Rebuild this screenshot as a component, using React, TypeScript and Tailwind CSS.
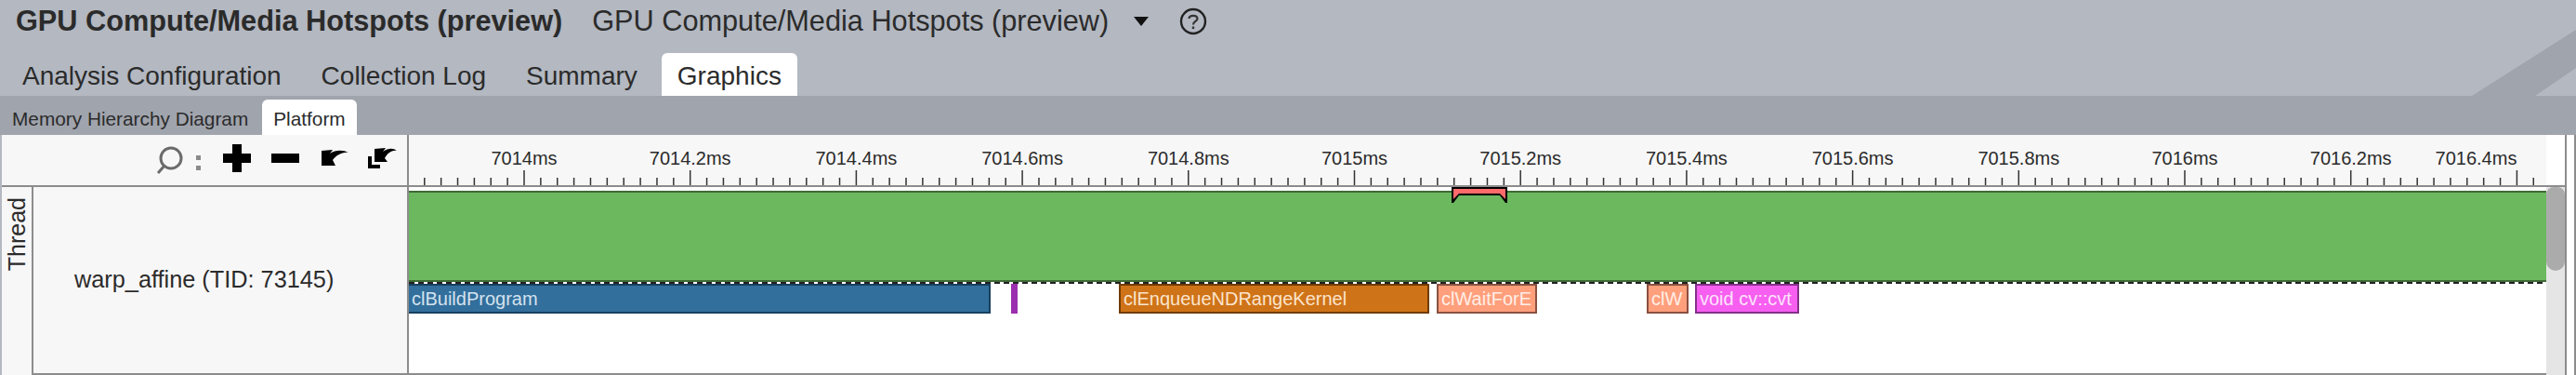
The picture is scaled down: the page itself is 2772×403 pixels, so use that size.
const labels = [
  "7014ms", "7014.2ms", "7014.4ms", "7014.6ms", "7014.8ms", "7015ms", "7015.2ms",
  "7015.4ms", "7015.6ms", "7015.8ms", "7016ms", "7016.2ms", "7016.4ms",
];

const STEP = 17.87;
const ORIGIN = 124; // x of the 7014ms tick inside the timeline

const ticks: number[] = [];
for (let i = -6; i <= 122; i++) ticks.push(i);

// x is relative to the timeline's left edge
const tasks = [
  { name: "clBuildProgram", x: -2, w: 628, box: "bg-[#336f9c] border-[#17405f] text-[#d3e2ee]" },
  { name: "", x: 648, w: 6, box: "bg-[#9b2fae] border-[#9b2fae] text-white" },
  { name: "clEnqueueNDRangeKernel", x: 764, w: 334, box: "bg-[#cf7318] border-[#703c00] text-[#fbe4cc]" },
  { name: "clWaitForE", x: 1106, w: 108, box: "bg-[#ff9f7c] border-[#8a5040] text-[#ffeee6]" },
  { name: "clW", x: 1332, w: 45, box: "bg-[#ff9f7c] border-[#8a5040] text-[#ffeee6]" },
  { name: "void cv::cvt", x: 1384, w: 112, box: "bg-[#f65ff0] border-[#85308a] text-[#fde3fc]" },
];

function Tab({ label, active }: { label: string; active?: boolean }) {
  return (
    <div className={active ? "h-[46px] px-[17px] pt-[3px] rounded-t-md bg-white flex items-center" : "h-[46px] px-[17px] pt-[3px] flex items-center"}>
      {label}
    </div>
  );
}

function ToolIcons() {
  return (
    <svg width="270" height="40" viewBox="160 150 270 40">
      <circle cx="184" cy="170" r="11" fill="none" stroke="#6b6b6b" strokeWidth="3" />
      <path d="M177 178 L170 186" stroke="#6b6b6b" strokeWidth="3" />
      <rect x="211" y="167" width="5" height="5" fill="#8a8a8a" />
      <rect x="211" y="178" width="5" height="5" fill="#8a8a8a" />
      <path d="M250 155h10v10h10v10h-10v10h-10v-10h-10v-10h10z" fill="#000" />
      <rect x="292" y="165" width="30" height="10" fill="#000" />
      <path d="M346 162 L358 161 L355 165 C361 161 369 161 375 164 C368 163 362 167 358 172 L361 178 L346 178 Z" fill="#000" />
      <path d="M403 160 L415 159 L412 163 C418 159 423 159 427 162 C421 161 417 165 414 170 L417 174 L403 174 Z" fill="#000" />
      <path d="M396 168 H400 V177 H409 V181 H396 Z" fill="#000" />
    </svg>
  );
}

function Ruler() {
  return (
    <div className="relative h-[56px] border-b-2 border-[#8c8c8c] bg-[#f7f7f7] overflow-hidden">
      <svg className="absolute left-0 top-0" width="2300" height="54">
        {ticks.map((i) => {
          const x = ORIGIN + i * STEP;
          return <line key={i} x1={x} x2={x} y1={i % 10 === 0 ? 38 : 46} y2={54} stroke="#333" strokeWidth="1.5" />;
        })}
      </svg>
      {labels.map((label, i) => {
        const x = ORIGIN + i * 10 * STEP;
        const last = i === labels.length - 1;
        return (
          <span
            key={label}
            className={last ? "absolute top-[14px] text-[20px] leading-[22px] whitespace-nowrap -translate-x-full" : "absolute top-[14px] text-[20px] leading-[22px] whitespace-nowrap -translate-x-1/2"}
            style={{ left: x }}
          >
            {label}
          </span>
        );
      })}
    </div>
  );
}

function Track() {
  return (
    <div className="relative flex-1 border-b-2 border-[#8c8c8c] bg-white overflow-hidden">
      <div className="mt-[4px] h-[98px] bg-[#6cb85f] border-y-2 border-[#3f6b35]" />
      <div className="h-[2px] bg-[repeating-linear-gradient(90deg,#222_0,#222_6px,#fff_6px,#fff_10px)]" />
      <div className="relative h-[32px]">
        {tasks.map((t) => (
          <div
            key={t.x}
            className={"absolute top-0 h-[32px] border-2 pl-[3px] text-[20px] leading-[28px] whitespace-nowrap overflow-hidden " + t.box}
            style={{ left: t.x, width: t.w }}
          >
            {t.name}
          </div>
        ))}
      </div>
      <svg className="absolute left-[1122px] top-0" width="60" height="17" viewBox="0 0 60 17">
        <path d="M0 0H60V17H58L52 9H8L2 17H0Z" fill="#000" />
        <path d="M2 2H58V13L52 7H8L2 13Z" fill="#ff6b6b" />
      </svg>
    </div>
  );
}

export default function App() {
  return (
    <div className="w-[2772px] h-[403px] overflow-hidden bg-white flex flex-col font-['Liberation_Sans',sans-serif] text-[#2b2b2b]">
      <div className="relative h-[103px] bg-[#b3b8c1] shrink-0">
        <svg className="absolute right-0 top-0" width="112" height="103" viewBox="0 0 112 103">
          <path d="M0 103 L112 32 L112 73 L68 103 Z" fill="#a0a4ad" />
        </svg>
        <div className="relative h-[46px] pl-[17px] flex items-center text-[30.7px]">
          <span className="font-bold">GPU Compute/Media Hotspots (preview)</span>
          <span className="ml-[32px]">GPU Compute/Media Hotspots (preview)</span>
          <svg className="ml-[27px]" width="16" height="10" viewBox="0 0 16 10">
            <path d="M0 0H16L8 10Z" fill="#111" />
          </svg>
          <svg className="ml-[33px]" width="30" height="30" viewBox="0 0 30 30">
            <circle cx="15" cy="15" r="13" fill="none" stroke="#222" strokeWidth="2.4" />
            <path d="M10.5 12 C10.5 8 19.5 7.5 19.5 12 C19.5 15 15 15 15 18.5" fill="none" stroke="#333" strokeWidth="2.2" />
            <rect x="13.8" y="20.5" width="2.4" height="2.6" fill="#333" />
          </svg>
        </div>
        <div className="relative mt-[11px] flex gap-[9px] pl-[7px] text-[28px]">
          <Tab label="Analysis Configuration" />
          <Tab label="Collection Log" />
          <Tab label="Summary" />
          <Tab label="Graphics" active />
        </div>
      </div>
      <div className="h-[42px] bg-[#a0a4ad] shrink-0 flex items-end pl-[13px] text-[20.8px]">
        <div className="h-[38px] pt-[3px] flex items-center">Memory Hierarchy Diagram</div>
        <div className="h-[38px] pt-[3px] ml-[15px] px-[12px] bg-white rounded-t-md flex items-center">Platform</div>
      </div>
      <div className="flex-1 flex border-l-2 border-[#b3b8c1] min-h-0">
        <div className="w-[438px] shrink-0 flex flex-col bg-[#f7f7f7] border-r-2 border-[#8c8c8c]">
          <div className="h-[56px] shrink-0 flex items-center justify-end pr-[8px] pb-[4px] border-b-2 border-[#8c8c8c]">
            <ToolIcons />
          </div>
          <div className="flex-1 flex min-h-0">
            <div className="w-[34px] shrink-0 flex justify-center border-r-2 border-[#8c8c8c] pt-[11px]">
              <span className="[writing-mode:vertical-rl] rotate-180 text-[25px] leading-none self-start">Thread</span>
            </div>
            <div className="flex-1 flex items-center pl-[44px] text-[25.3px] border-b-2 border-[#8c8c8c]">warp_affine (TID: 73145)</div>
          </div>
        </div>
        <div className="w-[2300px] shrink-0 flex flex-col">
          <Ruler />
          <Track />
        </div>
        <div className="w-[20px] shrink-0 flex flex-col bg-[#e5e5e5]">
          <div className="h-[56px] shrink-0 bg-white border-b-2 border-[#8c8c8c]" />
          <div className="h-[90px] rounded-b-[10px] rounded-t-[8px] bg-[#ababab]" />
        </div>
        <div className="w-[2px] shrink-0 bg-[#8c8c8c]" />
        <div className="w-[8px] shrink-0 bg-white" />
        <div className="w-[2px] shrink-0 bg-[#8c8c8c]" />
      </div>
    </div>
  );
}
